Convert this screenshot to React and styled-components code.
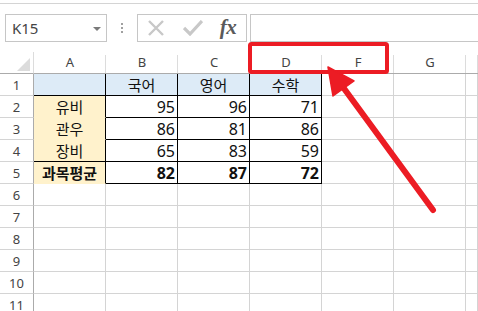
import React from "react";
import styled, { createGlobalStyle } from "styled-components";

const Global = createGlobalStyle`
  html, body { margin: 0; padding: 0; background: #fff; }
  body { width: 478px; height: 311px; overflow: hidden; font-family: "Noto Sans", "Noto Sans CJK KR", sans-serif; }
`;

const Page = styled.div`
  position: relative;
  width: 478px;
  height: 311px;
  overflow: hidden;
`;

const TopBar = styled.div`
  height: 3px;
  border-bottom: 1px solid #d4d4d4;
`;

const FormulaRow = styled.div`
  display: flex;
  align-items: flex-start;
  height: 48px;
  box-sizing: border-box;
  padding-top: 10px;
`;

const NameBox = styled.div`
  margin-left: 5px;
  width: 102px;
  height: 28px;
  box-sizing: border-box;
  border: 1px solid #c6c6c6;
  display: flex;
  align-items: center;
  justify-content: space-between;
  padding: 0 5px 0 6px;
  font-family: "Noto Sans", sans-serif;
  font-size: 15px;
  color: #444;
`;

const DropTri = styled.span`
  width: 0;
  height: 0;
  border-left: 4px solid transparent;
  border-right: 4px solid transparent;
  border-top: 4px solid #7a7a7a;
  margin-top: 1px;
`;

const Dots = styled.div`
  width: 30px;
  height: 28px;
  display: flex;
  flex-direction: column;
  align-items: center;
  justify-content: center;
  gap: 2px;
  span {
    width: 2px;
    height: 2px;
    background: #a0a0a0;
  }
`;

const ButtonBox = styled.div`
  width: 110px;
  height: 28px;
  box-sizing: border-box;
  border: 1px solid #c6c6c6;
  display: flex;
  align-items: center;
  padding-left: 9px;
`;

const IconSlot = styled.div`
  width: ${(p) => p.$w}px;
  margin-right: ${(p) => p.$mr}px;
  display: flex;
  align-items: center;
  justify-content: center;
`;

const Fx = styled.span`
  font-family: "Liberation Serif", serif;
  font-style: italic;
  font-size: 21px;
  font-weight: bold;
  color: #5a5a5a;
  letter-spacing: -0.5px;
  line-height: 1;
  margin-top: -2px;
`;

const FormulaInput = styled.div`
  flex: 1;
  margin-left: 3px;
  margin-right: -3px;
  height: 28px;
  box-sizing: border-box;
  border: 1px solid #c6c6c6;
`;

const Grid = styled.div`
  display: grid;
  grid-template-columns: 34px repeat(6, 72px) 1fr;
  grid-auto-rows: 22px;
`;

const Corner = styled.div`
  position: relative;
  box-sizing: border-box;
  border-right: 1px solid #dcdcdc;
  border-bottom: 1px solid #ababab;
  &::after {
    content: "";
    position: absolute;
    right: 3px;
    bottom: 2px;
    width: 0;
    height: 0;
    border-left: 13px solid transparent;
    border-bottom: 13px solid #dcdcdc;
  }
`;

const ColHead = styled.div`
  position: relative;
  box-sizing: border-box;
  border-bottom: 1px solid #ababab;
  display: flex;
  align-items: center;
  justify-content: center;
  font-size: 13px;
  color: #444;
  padding-bottom: 1px;
  &::after {
    content: "";
    position: absolute;
    right: 0;
    top: 3px;
    bottom: 0;
    width: 1px;
    background: #dcdcdc;
  }
`;

const RowHead = styled.div`
  box-sizing: border-box;
  border-right: 1px solid #ababab;
  border-bottom: 1px solid #d4d4d4;
  display: flex;
  align-items: center;
  justify-content: center;
  font-size: 13px;
  color: #444;
`;

const Cell = styled.div`
  box-sizing: border-box;
  background: ${(p) => p.$bg || "#fff"};
  border-right: 1px solid ${(p) => p.$br || "#d4d4d4"};
  border-bottom: 1px solid ${(p) => p.$bb || "#d4d4d4"};
  display: flex;
  align-items: center;
  justify-content: ${(p) => (p.$num ? "flex-end" : "center")};
  padding-right: ${(p) => (p.$num ? "2px" : "0")};
  font-family: ${(p) =>
    p.$num ? '"Noto Sans", sans-serif' : '"Noto Sans CJK KR", "Noto Sans", sans-serif'};
  font-size: ${(p) => (p.$num ? "16px" : "15px")};
  font-weight: ${(p) => (p.$bold ? 700 : 400)};
  color: #111;
  white-space: nowrap;
`;

const Overlay = styled.svg`
  position: absolute;
  left: 0;
  top: 0;
  pointer-events: none;
`;

const BLUE = "#ddebf7";
const YEL = "#fff2cc";
const BLK = "#000";

const data = [
  { a: "", b: "국어", c: "영어", d: "수학", head: true },
  { a: "유비", b: 95, c: 96, d: 71 },
  { a: "관우", b: 86, c: 81, d: 86 },
  { a: "장비", b: 65, c: 83, d: 59 },
  { a: "과목평균", b: 82, c: 87, d: 72, bold: true },
];

const cols = ["A", "B", "C", "D", "F", "G"];

export default function App() {
  const rows = [];
  for (let r = 1; r <= 11; r++) {
    const d = data[r - 1];
    rows.push(<RowHead key={`h${r}`}>{r}</RowHead>);
    if (d) {
      const aBg = d.head ? BLUE : YEL;
      const aBb = r === 1 || r === 4 ? BLK : YEL;
      rows.push(
        <Cell key={`a${r}`} $bg={aBg} $br={BLK} $bb={aBb} $bold={d.bold}>
          {d.a}
        </Cell>
      );
      ["b", "c", "d"].forEach((k) => {
        rows.push(
          <Cell
            key={`${k}${r}`}
            $bg={d.head ? BLUE : "#fff"}
            $br={BLK}
            $bb={BLK}
            $num={!d.head}
            $bold={d.bold}
          >
            {d[k]}
          </Cell>
        );
      });
      rows.push(<Cell key={`f${r}`} />);
      rows.push(<Cell key={`g${r}`} />);
      rows.push(<Cell key={`x${r}`} />);
    } else {
      for (let c = 0; c < 7; c++) rows.push(<Cell key={`e${r}-${c}`} />);
    }
  }

  return (
    <Page>
      <Global />
      <TopBar />
      <FormulaRow>
        <NameBox>
          K15
          <DropTri />
        </NameBox>
        <Dots>
          <span />
          <span />
          <span />
        </Dots>
        <ButtonBox>
          <IconSlot $w={18} $mr={18}>
            <svg width="18" height="16" viewBox="0 0 18 16">
              <path d="M2 1 L16 15 M16 1 L2 15" stroke="#c8c8c8" strokeWidth="2.4" fill="none" />
            </svg>
          </IconSlot>
          <IconSlot $w={20} $mr={15}>
            <svg width="20" height="16" viewBox="0 0 20 16">
              <path d="M1 8 L7 14 L19 1" stroke="#c8c8c8" strokeWidth="3.2" fill="none" />
            </svg>
          </IconSlot>
          <IconSlot $w={20} $mr={0}>
            <Fx>fx</Fx>
          </IconSlot>
        </ButtonBox>
        <FormulaInput />
      </FormulaRow>
      <Grid>
        <Corner />
        {cols.map((c) => (
          <ColHead key={c}>{c}</ColHead>
        ))}
        <ColHead />
        {rows}
      </Grid>
      <Overlay width="478" height="311" viewBox="0 0 478 311">
        <rect x="250" y="44" width="137" height="28" rx="1.5" fill="none" stroke="#ec1c24" strokeWidth="4" />
        <line x1="433" y1="210" x2="340" y2="83" stroke="#ec1c24" strokeWidth="6" strokeLinecap="round" />
        <polygon points="328,67 354,81 333,96" fill="#ec1c24" stroke="#ec1c24" strokeWidth="1.5" strokeLinejoin="round" />
      </Overlay>
    </Page>
  );
}
